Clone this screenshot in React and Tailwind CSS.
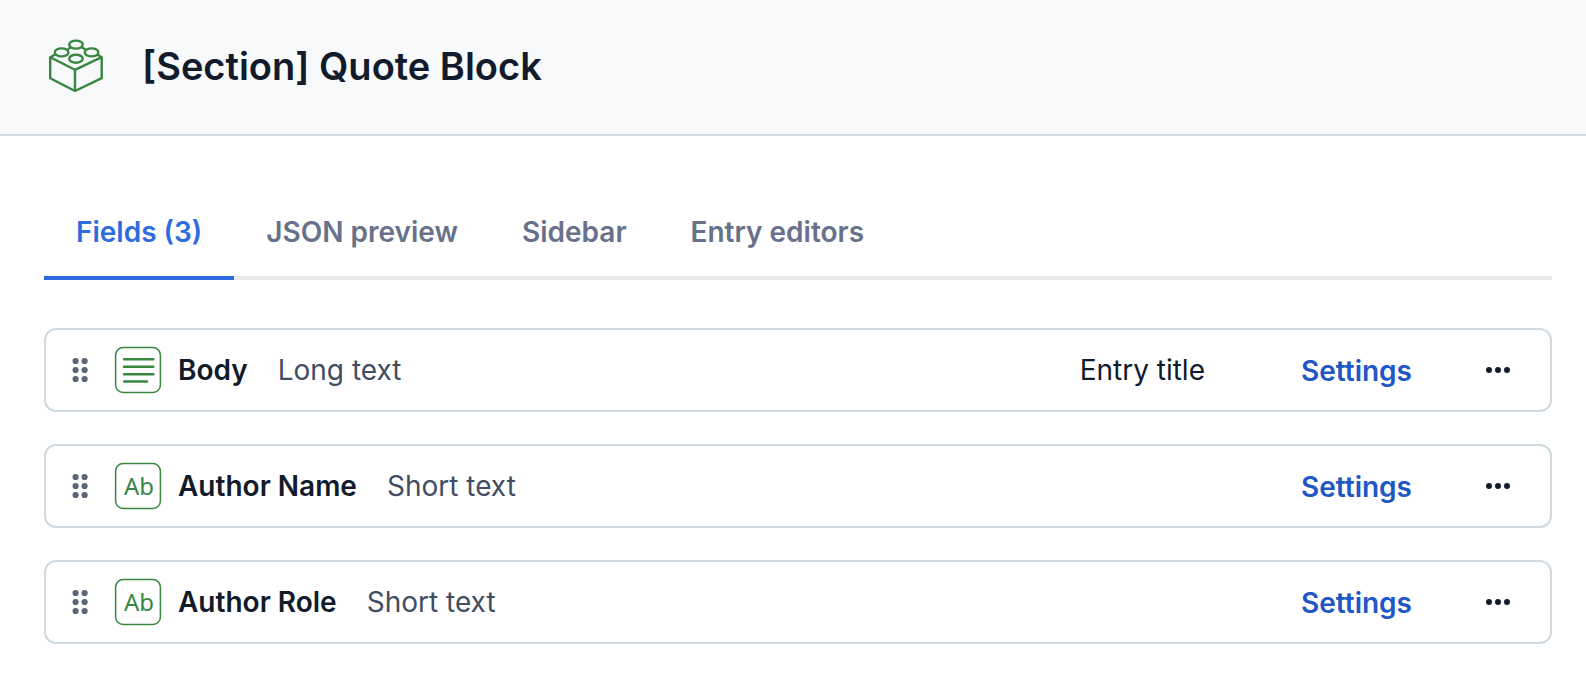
const tabs = ["Fields (3)", "JSON preview", "Sidebar", "Entry editors"];

const fields = [
  { name: "Body", type: "Long text", icon: "long", entryTitle: true },
  { name: "Author Name", type: "Short text", icon: "short" },
  { name: "Author Role", type: "Short text", icon: "short" },
];

function BrickIcon() {
  return (
    <svg className="size-16 shrink-0" viewBox="0 0 64 64" fill="none" stroke="#38863f" strokeWidth="2.4" strokeLinejoin="round" aria-hidden="true">
      <path d="M11.5 19.4 6.2 22.2V43.2L31 56 57.7 43.2V22.2L53.5 19.8M6.2 22.2 31 34.8 57.7 22.2M31 34.8V56M23.5 14.6 26.5 12.4M38 12.4 41.5 14.6" />
      <ellipse cx="32" cy="9.6" rx="6.8" ry="4" />
      <ellipse cx="17.6" cy="17.4" rx="6.8" ry="4" />
      <ellipse cx="47.6" cy="17.4" rx="6.8" ry="4" />
      <ellipse cx="32" cy="23.7" rx="6.8" ry="4" />
    </svg>
  );
}

function FieldIcon({ kind }) {
  return (
    <svg className="size-12 shrink-0" viewBox="0 0 48 48" fill="none" stroke="#38863f" aria-hidden="true">
      <rect x="1.6" y="1.6" width="44.8" height="44.8" rx="7.5" strokeWidth="1.5" />
      {kind === "long" ? (
        <path d="M10.2 13.2H39.3M10.2 20.8H39.3M10.2 28.3H39.3M10.2 35.5H33" strokeWidth="2.6" strokeLinecap="round" />
      ) : (
        <text x="25" y="33" textAnchor="middle" fill="#38863f" stroke="none" className="font-['Noto_Sans',sans-serif] text-[24px]">
          Ab
        </text>
      )}
    </svg>
  );
}

function DragIcon() {
  return (
    <svg width="16" height="26" viewBox="0 0 16 26" fill="#5a657c" aria-hidden="true">
      {[4, 13, 22].map((y) => (
        <g key={y}>
          <circle cx="3.6" cy={y} r="3.1" />
          <circle cx="12.6" cy={y} r="3.1" />
        </g>
      ))}
    </svg>
  );
}

function MoreIcon() {
  return (
    <svg width="24" height="8" viewBox="0 0 24 8" fill="#111b2b" aria-hidden="true">
      <circle cx="3" cy="4" r="3" />
      <circle cx="12" cy="4" r="3" />
      <circle cx="21" cy="4" r="3" />
    </svg>
  );
}

function FieldRow({ field }) {
  return (
    <li className="flex h-[84px] items-center rounded-xl border-2 border-[#cfd9e0] bg-white pr-10 pl-[26px]">
      <button type="button" aria-label={`Reorder ${field.name}`} className="mr-[26px] cursor-grab">
        <DragIcon />
      </button>
      <FieldIcon kind={field.icon} />
      <span className="ml-4 font-semibold text-[#111b2b]">{field.name}</span>
      <span className="ml-[30px] text-[#414d63]">{field.type}</span>
      <span className="flex-1" />
      {field.entryTitle && <span className="mr-24 text-[#111b2b]">Entry title</span>}
      <button type="button" className="mr-[74px] pt-0.5 font-semibold text-[#2157c4]">Settings</button>
      <button type="button" aria-label={`Actions for ${field.name}`}>
        <MoreIcon />
      </button>
    </li>
  );
}

export default function App() {
  return (
    <div className="min-h-screen bg-white font-['Inter',sans-serif] text-[28px] leading-10">
      <header className="flex h-[136px] items-center gap-[34px] border-b-2 border-[#cfd9e0] bg-[#f7f9fb] px-11">
        <BrickIcon />
        <h1 className="pb-0.5 text-[38px] leading-12 font-semibold text-[#111b2b]">[Section] Quote Block</h1>
      </header>
      <main className="pt-[52px] pr-[34px] pb-11 pl-11">
        <div role="tablist" className="flex h-[92px] border-b-4 border-[#e7ebee]">
          {tabs.map((tab, i) => (
            <button
              key={tab}
              type="button"
              role="tab"
              aria-selected={i === 0}
              className={
                i === 0
                  ? "-mb-1 border-b-4 border-[#2e6cde] px-8 font-semibold text-[#2e6cde]"
                  : "-mb-1 border-b-4 border-transparent px-8 font-semibold text-[#67728a]"
              }
            >
              {tab}
            </button>
          ))}
        </div>
        <ul className="mt-12 flex flex-col gap-8">
          {fields.map((field) => (
            <FieldRow key={field.name} field={field} />
          ))}
        </ul>
      </main>
    </div>
  );
}
